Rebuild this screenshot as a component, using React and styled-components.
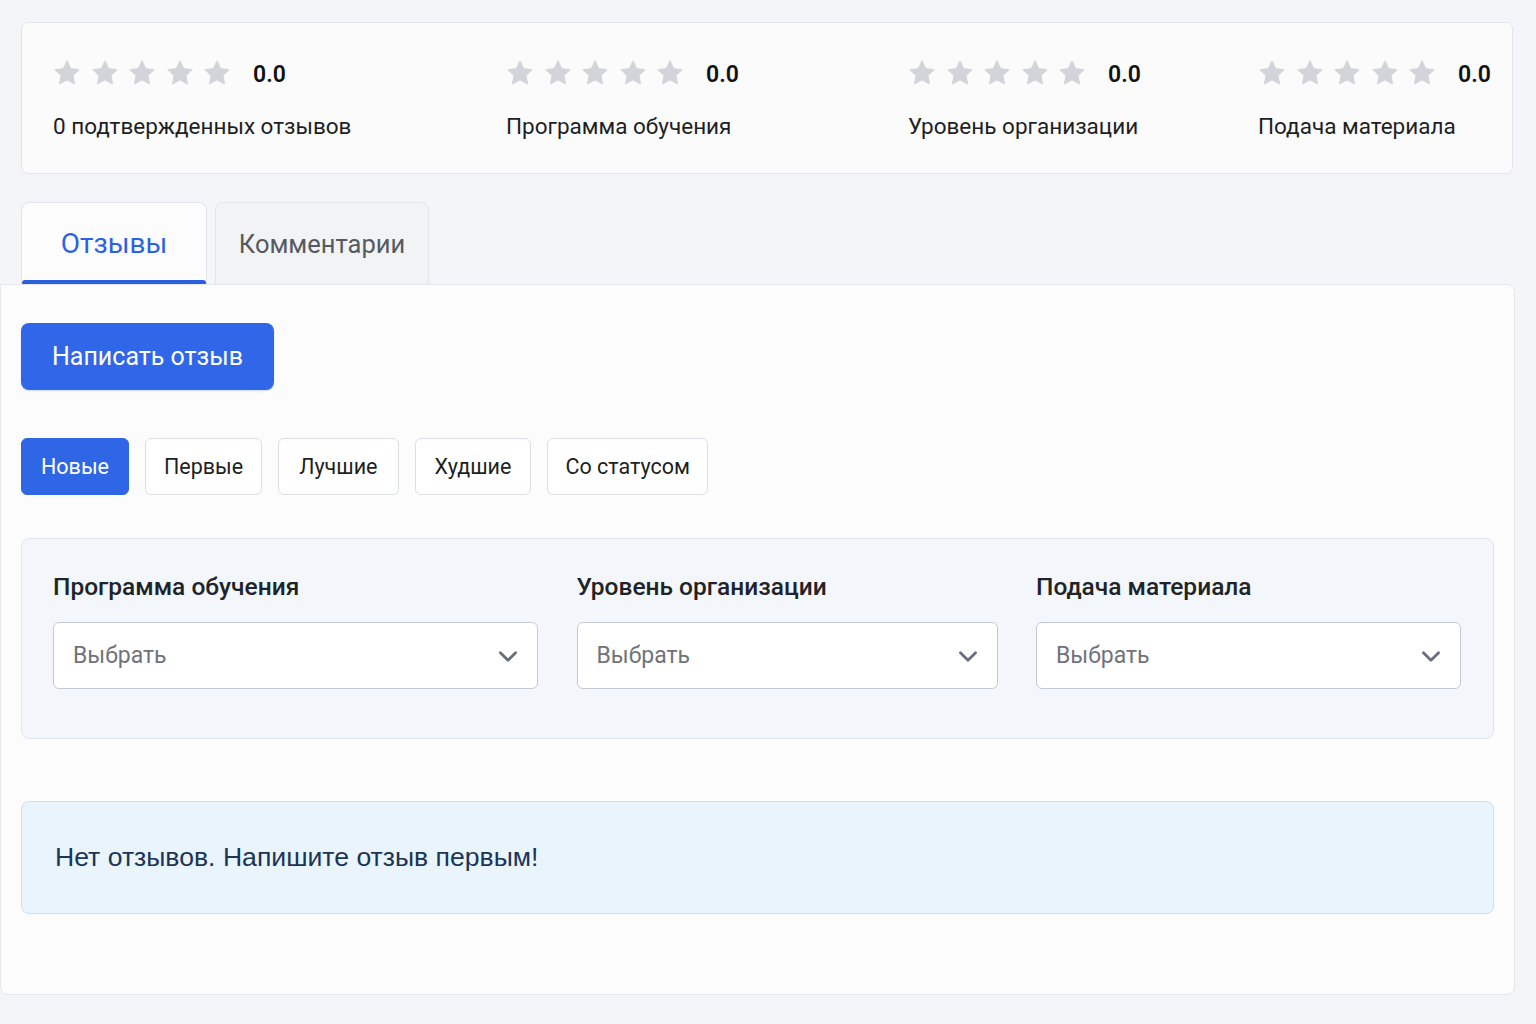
import React from "react";
import styled, { createGlobalStyle } from "styled-components";

const Global = createGlobalStyle`
  html, body { margin: 0; padding: 0; background: #f4f5f8; }
  body { font-family: Roboto, "Noto Sans", "Liberation Sans", sans-serif; color: #1f2328; }
  * { box-sizing: border-box; }
`;

const Page = styled.div`
  width: 1515px;
  padding-top: 22px;
  padding-bottom: 28px;
`;

const SummaryCard = styled.section`
  margin: 0 2px 0 21px;
  height: 152px;
  background: #fbfbfc;
  border: 1px solid #e3e5ea;
  border-radius: 7px;
  padding: 35px 32px 0 31px;
  display: grid;
  grid-template-columns: 453px 402px 350px 1fr;
`;

const Stat = styled.div`
  display: flex;
  flex-direction: column;
  gap: 24px;
`;

const StarRow = styled.div`
  display: flex;
  align-items: center;
  height: 30px;
`;

const Stars = styled.div`
  display: flex;
  gap: 9.5px;
  margin-right: 22px;
`;

const Score = styled.span`
  font-size: 23px;
  font-weight: 600;
  color: #111;
  line-height: 1;
  margin-top: 3px;
`;

const StatLabel = styled.span`
  font-size: 22.5px;
  color: #1d1f23;
  line-height: 28px;
  white-space: nowrap;
`;

const TabBar = styled.div`
  display: flex;
  gap: 8px;
  margin: 28px 0 0 21px;
  height: 82px;
`;

const Tab = styled.button`
  position: relative;
  width: ${(p) => p.$w}px;
  height: 82px;
  padding: 0;
  border: 1px solid #e3e5ea;
  border-bottom: none;
  border-radius: 8px 8px 0 0;
  background: ${(p) => (p.$active ? "#fcfcfd" : "#f2f3f5")};
  color: ${(p) => (p.$active ? "#2b62e0" : "#555a61")};
  font-family: inherit;
  font-size: ${(p) => (p.$active ? 28 : 25.5)}px;
  font-weight: 400;
  cursor: pointer;
  &::after {
    content: "";
    display: ${(p) => (p.$active ? "block" : "none")};
    position: absolute;
    left: 0;
    right: 0;
    bottom: 0;
    height: 4px;
    border-radius: 3px 3px 0 0;
    background: #2a5fdc;
  }
`;

const Panel = styled.div`
  background: #fcfcfd;
  border: 1px solid #e5e7eb;
  border-radius: 0 8px 8px 8px;
  padding: 38px 20px 80px 20px;
`;

const PrimaryButton = styled.button`
  height: 67px;
  padding: 0 31px;
  border: none;
  border-radius: 8px;
  background: #3067e8;
  color: #fff;
  font-family: inherit;
  font-size: 25px;
  cursor: pointer;
  box-shadow: 0 1px 2px rgba(40, 80, 200, 0.2);
`;

const SortRow = styled.div`
  display: flex;
  gap: 16px;
  margin-top: 48px;
`;

const SortButton = styled.button`
  height: 57px;
  padding: 0 ${(p) => p.$px}px;
  border-radius: 6px;
  border: 1px solid ${(p) => (p.$active ? "#2f66e6" : "#dcdfe4")};
  background: ${(p) => (p.$active ? "#2f66e6" : "#ffffff")};
  color: ${(p) => (p.$active ? "#ffffff" : "#1d1f23")};
  font-family: inherit;
  font-size: 21.5px;
  cursor: pointer;
`;

const FilterBox = styled.div`
  margin-top: 43px;
  height: 201px;
  background: #f3f6fa;
  border: 1px solid #e2e6ec;
  border-radius: 8px;
  padding: 32px 32px 0 31px;
  display: grid;
  grid-template-columns: 485px 421px 425px;
  justify-content: space-between;
`;

const Field = styled.div`
  display: flex;
  flex-direction: column;
  gap: 19px;
`;

const FieldLabel = styled.label`
  font-size: 24.5px;
  font-weight: 500;
  color: #202328;
  line-height: 32px;
`;

const Select = styled.div`
  height: 67px;
  background: #ffffff;
  border: 1.5px solid #c3cad5;
  border-radius: 6px;
  padding: 0 16px 0 19px;
  display: flex;
  align-items: center;
  justify-content: space-between;
  font-size: 23px;
  color: #6f737a;
`;

const Alert = styled.div`
  margin-top: 62px;
  height: 113px;
  background: #eaf4fd;
  border: 1px solid #c8dff4;
  border-radius: 8px;
  padding: 0 33px;
  display: flex;
  align-items: center;
  font-family: "Liberation Sans", Arial, sans-serif;
  font-size: 26.6px;
  color: #1b3556;
`;

const Star = () => (
  <svg width="28" height="28" viewBox="0 0 24 24" aria-hidden="true">
    <path
      d="M12 1.8l3.1 6.5 7 .9-5.1 4.9 1.3 7L12 17.7l-6.3 3.4 1.3-7L1.9 9.2l7-.9z"
      fill="#d2d4d9"
      stroke="#d2d4d9"
      strokeWidth="1"
      strokeLinejoin="round"
    />
  </svg>
);

const Chevron = () => (
  <svg width="26" height="26" viewBox="0 0 24 24" aria-hidden="true">
    <path d="M5 9l7 7 7-7" fill="none" stroke="#6b7078" strokeWidth="2.6" strokeLinecap="round" strokeLinejoin="round" />
  </svg>
);

const stats = [
  "0 подтвержденных отзывов",
  "Программа обучения",
  "Уровень организации",
  "Подача материала",
];

const sorts = [
  { label: "Новые", px: 19, active: true },
  { label: "Первые", px: 18 },
  { label: "Лучшие", px: 20 },
  { label: "Худшие", px: 19 },
  { label: "Со статусом", px: 17 },
];

const fields = ["Программа обучения", "Уровень организации", "Подача материала"];

export default function App() {
  return (
    <>
      <Global />
      <Page>
        <SummaryCard>
          {stats.map((s) => (
            <Stat key={s}>
              <StarRow>
                <Stars>
                  {[0, 1, 2, 3, 4].map((i) => (
                    <Star key={i} />
                  ))}
                </Stars>
                <Score>0.0</Score>
              </StarRow>
              <StatLabel>{s}</StatLabel>
            </Stat>
          ))}
        </SummaryCard>

        <TabBar>
          <Tab $active $w={186}>Отзывы</Tab>
          <Tab $w={214}>Комментарии</Tab>
        </TabBar>

        <Panel>
          <PrimaryButton>Написать отзыв</PrimaryButton>

          <SortRow>
            {sorts.map((s) => (
              <SortButton key={s.label} $active={s.active} $px={s.px}>
                {s.label}
              </SortButton>
            ))}
          </SortRow>

          <FilterBox>
            {fields.map((f) => (
              <Field key={f}>
                <FieldLabel>{f}</FieldLabel>
                <Select>
                  <span>Выбрать</span>
                  <Chevron />
                </Select>
              </Field>
            ))}
          </FilterBox>

          <Alert>Нет отзывов. Напишите отзыв первым!</Alert>
        </Panel>
      </Page>
    </>
  );
}
